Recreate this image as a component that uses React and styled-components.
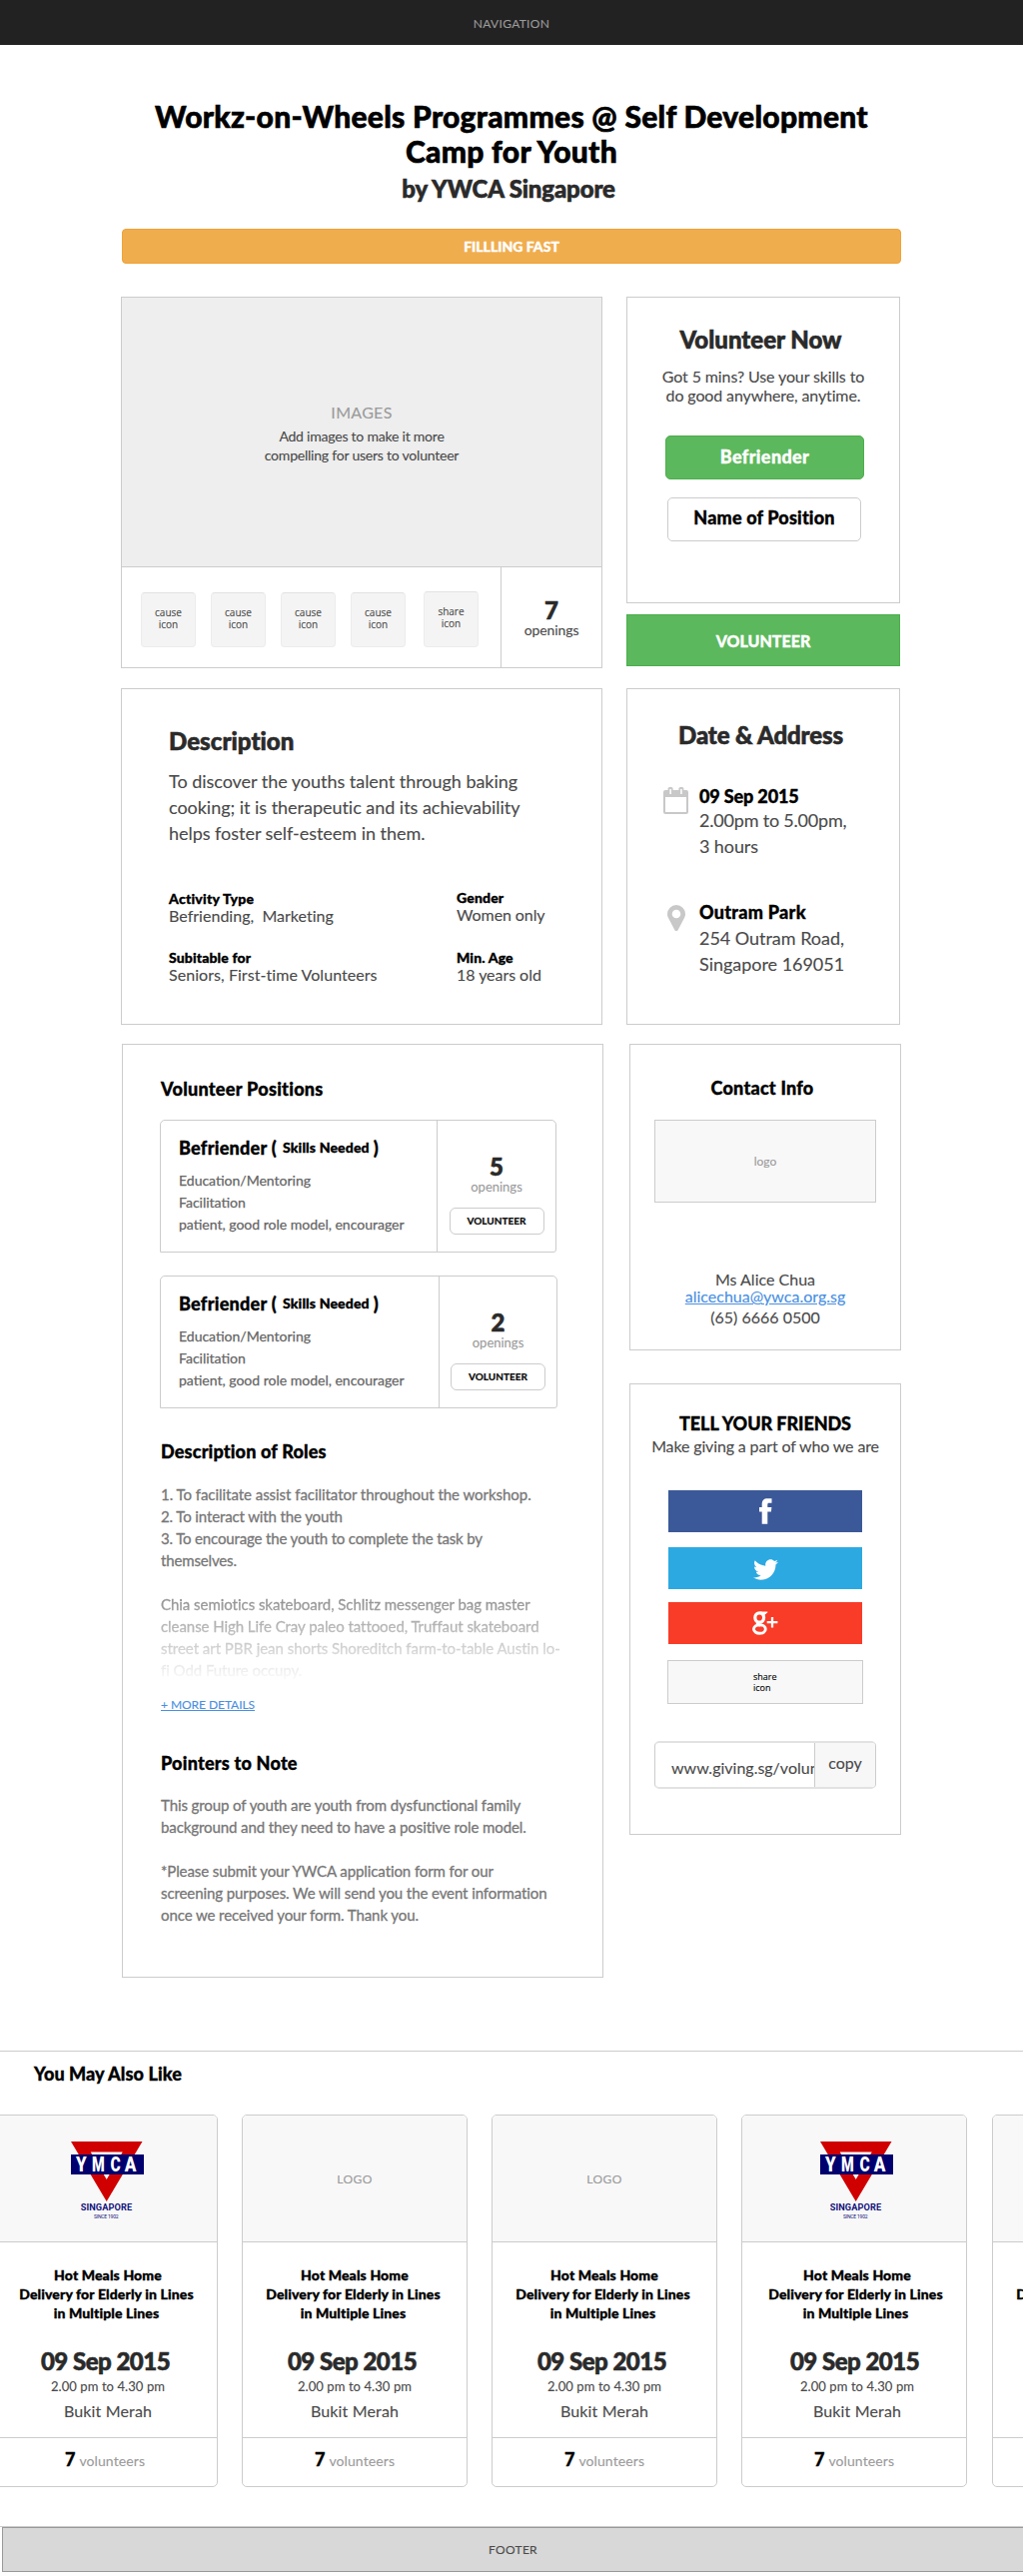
import React from "react";
import styled, { createGlobalStyle, css } from "styled-components";
import { FaTwitter } from "react-icons/fa";

const line = "#cccccc";
const ink = "#4a4a4a";
const dark = "#2a2a2a";
const muted = "#9b9b9b";
const green = "#5cb85c";
const blue = "#4a90e2";

const GlobalStyle = createGlobalStyle`
  * { box-sizing: border-box; }
  body {
    margin: 0;
    background: #fff;
    color: #000;
    font-family: Lato, "Liberation Sans", sans-serif;
    font-kerning: normal;
  }
  h1, h2, h3, p, ul { margin: 0; padding: 0; }
`;

const type = (size, height, weight = 400, color = ink) => css`
  font-size: ${size}px;
  line-height: ${height}px;
  font-weight: ${weight};
  color: ${color};
  letter-spacing: ${(p) => p.$track || 0}px;
  -webkit-text-stroke: ${weight === 900 ? (size > 20 ? 0.6 : size > 12 ? 0.35 : 0.15) : 0.12}px currentColor;
`;

const Page = styled.div`
  width: 1024px;
  height: 2579px;
  overflow: hidden;
`;

/* ---------- header ---------- */
const NavBar = styled.nav`
  height: 45px;
  padding-top: 1px;
  background: #222;
  text-align: center;
  ${type(12, 45, 400, muted)}
`;
const Header = styled.header`
  padding-top: 54px;
  text-align: center;
`;
const Title = styled.h1`
  ${type(30, 35, 900, "#000")}
`;
const Organiser = styled.p`
  margin-top: 5px;
  padding-right: 6px;
  ${type(24, 30, 900, dark)}
`;
const Alert = styled.div`
  width: 780px;
  height: 35px;
  margin: 25px 0 0 122px;
  border: 1px solid #eea236;
  border-radius: 4px;
  background: #f0ad4e;
  ${type(14, 33, 900, "#fff")}
`;

/* ---------- shared panels ---------- */
const Row = styled.section`
  display: flex;
  align-items: flex-start;
  gap: ${(p) => p.$gap || 24}px;
  margin: ${(p) => p.$top}px 0 0 ${(p) => p.$left || 121}px;
`;
const Column = styled.div`
  display: flex;
  flex-direction: column;
  width: ${(p) => p.$w}px;
`;
const Panel = styled.div`
  display: flex;
  flex-direction: column;
  align-items: ${(p) => (p.$center ? "center" : "stretch")};
  flex: none;
  width: ${(p) => p.$w}px;
  height: ${(p) => p.$h}px;
  margin-top: ${(p) => p.$top || 0}px;
  padding: ${(p) => p.$pad || 0};
  border: 1px solid ${line};
  background: #fff;
`;
const Heading = styled.h2`
  margin-right: ${(p) => p.$nudge || 0}px;
  ${type(24, 30, 900, dark)}
`;
const SubHeading = styled.h3`
  margin-top: ${(p) => p.$top || 0}px;
  margin-right: ${(p) => p.$nudge || 0}px;
  ${type(18, 22, 900, "#000")}
`;
const Count = styled.strong`
  ${type(24, 26, 900, dark)}
`;
const CountLabel = styled.span`
  ${(p) => (p.$small ? type(13, 14, 400, muted) : type(14, 14, 400, ink))}
`;

/* ---------- gallery ---------- */
const Gallery = styled.div`
  display: flex;
  flex-direction: column;
  align-items: center;
  height: 270px;
  padding-top: 105px;
  border-bottom: 1px solid ${line};
  background: #eee;
  text-align: center;
`;
const GalleryTitle = styled.p`
  ${type(16, 20, 400, muted)}
`;
const GalleryText = styled.p`
  margin-top: 4px;
  ${type(14, 19)}
`;
const GalleryFoot = styled.div`
  display: flex;
  height: 100px;
`;
const Tiles = styled.div`
  display: flex;
  align-items: flex-start;
  gap: 15px;
  width: 379px;
  padding: 25px 0 0 19px;
`;
const Tile = styled.div`
  width: 55px;
  height: ${(p) => (p.$share ? 56 : 55)}px;
  margin: ${(p) => (p.$share ? "-1px 0 0 3px" : 0)};
  padding-top: 13px;
  border: 1px solid #ececec;
  border-top-color: #e2e2e2;
  border-radius: 4px;
  background: #f4f4f4;
  text-align: center;
  ${type(10, 12)}
  font-family: "Open Sans", "Noto Sans", sans-serif;
`;
const Openings = styled.div`
  display: flex;
  flex-direction: column;
  align-items: center;
  flex: 1;
  padding-top: ${(p) => p.$top}px;
  border-left: 1px solid ${line};
`;

/* ---------- volunteer now ---------- */
const Pitch = styled.p`
  margin-top: 12px;
  text-align: center;
  ${type(16, 19)}
`;
const PositionButton = styled.div`
  width: ${(p) => (p.$primary ? 199 : 194)}px;
  height: 44px;
  margin: ${(p) => (p.$primary ? "31px 0 0 3px" : "18px 0 0 2px")};
  border: 1px solid ${(p) => (p.$primary ? "#4cae4c" : line)};
  border-radius: 5px;
  background: ${(p) => (p.$primary ? green : "#fff")};
  text-align: center;
  ${type(18, 40, 900)}
  line-height: ${(p) => (p.$primary ? 40 : 39)}px;
  color: ${(p) => (p.$primary ? "#fff" : "#000")};
`;
const VolunteerBar = styled.div`
  height: 52px;
  margin-top: 11px;
  border: 1px solid #4cae4c;
  background: ${green};
  text-align: center;
  ${type(16, 51, 900, "#fff")}
`;

/* ---------- description ---------- */
const Lead = styled.p`
  margin-top: 12px;
  white-space: nowrap;
  ${type(18, 26)}
`;
const Facts = styled.div`
  display: flex;
  margin-top: 44px;
`;
const FactColumn = styled.div`
  display: flex;
  flex: none;
  flex-direction: column;
  gap: ${(p) => p.$gap}px;
  width: ${(p) => p.$w}px;
  margin-top: ${(p) => p.$top || 0}px;
  white-space: pre;
`;
const FactLabel = styled.div`
  ${type(14, 17, 900, "#000")}
`;
const FactValue = styled.div`
  ${type(16, 18)}
`;

/* ---------- date & address ---------- */
const Place = styled.div`
  display: flex;
  width: 100%;
  margin-top: ${(p) => p.$top}px;
  padding-left: 36px;
`;
const PlaceIcon = styled.div`
  display: flex;
  justify-content: center;
  flex: none;
  width: 25px;
  margin-right: 11px;
  padding-top: ${(p) => p.$top}px;
  height: 32px;
`;
const PlaceName = styled.div`
  margin-bottom: ${(p) => p.$tight || 0}px;
  ${type(18, 24, 900, "#000")}
`;
const PlaceLine = styled.div`
  ${type(18, 26)}
`;

/* ---------- volunteer positions ---------- */
const PositionCard = styled.div`
  display: flex;
  width: ${(p) => p.$w}px;
  height: 133px;
  margin: ${(p) => p.$top}px 0 0 -1px;
  border: 1px solid ${line};
  border-radius: 5px 5px 3px 0;
`;
const PositionInfo = styled.div`
  width: ${(p) => p.$w}px;
  padding: 16px 0 0 18px;
`;
const PositionTitle = styled.div`
  display: flex;
  ${type(18, 22, 900, "#000")}
`;
const Skills = styled.span`
  margin: 0 4px 0 6px;
  ${type(14, 22, 900, "#000")}
`;
const PositionLines = styled.div`
  margin-top: 11px;
  ${type(14, 22, 400, "#666")}
  -webkit-text-stroke: 0.25px currentColor;
`;
const SmallButton = styled.div`
  width: 95px;
  height: 27px;
  margin-top: 14px;
  border: 1px solid ${line};
  border-radius: 6px;
  text-align: center;
  ${type(10, 25, 900, "#111")}
`;
const Body = styled.p`
  margin-top: ${(p) => p.$top || 0}px;
  white-space: nowrap;
  ${type(15, 22, 400, "#777")}
  -webkit-text-stroke: 0.3px currentColor;
`;
const Faded = styled(Body)`
  mask-image: linear-gradient(rgba(0, 0, 0, 0.86), rgba(0, 0, 0, 0.02));
`;
const BodyLine = styled.span`
  display: block;
  letter-spacing: ${(p) => p.$track}px;
`;
const MoreLink = styled.a`
  margin-top: 16px;
  text-decoration: underline;
  ${type(12, 16, 400, blue)}
`;

/* ---------- contact ---------- */
const LogoBox = styled.div`
  width: 222px;
  height: 83px;
  margin-top: 21px;
  border: 1px solid ${line};
  background: #f8f8f8;
  text-align: center;
  ${type(12, 81, 400, muted)}
`;
const ContactLine = styled.div`
  margin-top: ${(p) => p.$top || 0}px;
  ${type(16, 17)}
  ${(p) => p.$link && `color: ${blue}; text-decoration: underline;`}
`;

/* ---------- share ---------- */
const Slogan = styled.p`
  margin-top: 2px;
  ${type(16, 20)}
`;
const ShareButton = styled.div`
  display: flex;
  align-items: center;
  justify-content: center;
  flex: none;
  width: 194px;
  height: 42px;
  margin-top: ${(p) => p.$top}px;
  padding-top: ${(p) => p.$drop || 0}px;
  background: ${(p) => p.$bg};
  color: #fff;
`;
const SharePlaceholder = styled.div`
  width: 196px;
  height: 44px;
  margin-top: 16px;
  padding: 10px 0 0 85px;
  border: 1px solid ${line};
  background: #f8f8f8;
  ${type(9, 11, 400, "#000")}
  font-family: "Open Sans", "Noto Sans", sans-serif;
`;
const UrlField = styled.div`
  display: flex;
  width: 222px;
  height: 48px;
  margin-top: 37px;
  border: solid #e2e2e2;
  border-width: 2px 1px;
  border-left-color: ${line};
  border-right-color: ${line};
  border-radius: 5px;
  overflow: hidden;
`;
const UrlText = styled.div`
  width: 159px;
  padding: 3px 0 0 16px;
  overflow: hidden;
  white-space: nowrap;
  ${type(16, 44)}
`;
const CopyButton = styled.div`
  flex: 1;
  border-left: 1px solid ${line};
  background: #f7f7f7;
  text-align: center;
  ${type(16, 40)}
`;

/* ---------- related ---------- */
const Related = styled.section`
  height: 477px;
  margin-top: 73px;
  padding-top: 11px;
  border-top: 1px solid ${line};
  border-bottom: 1px solid ${line};
  overflow: hidden;
`;
const RelatedTitle = styled.h3`
  padding-left: 34px;
  ${type(18, 22, 900, "#000")}
`;
const RelatedRow = styled.div`
  display: flex;
  gap: 24px;
  margin: 30px 0 0 -8px;
`;
const EventCard = styled.article`
  display: flex;
  flex-direction: column;
  flex: none;
  width: 226px;
  height: 373px;
  border: 1px solid ${line};
  border-radius: 5px;
  overflow: hidden;
  text-align: center;
  &:last-child { margin-left: 1px; }
`;
const EventLogo = styled.div`
  display: flex;
  height: 127px;
  border-bottom: 1px solid ${line};
  background: #f8f8f8;
  align-items: center;
  justify-content: center;
  padding: ${(p) => (p.$drawn ? "6px 0 0 6px" : "2px 0 0")};
  ${type(12, 16, 400, muted)}
`;
const EventBody = styled.div`
  height: 196px;
  padding: 23px 0 0 ${(p) => p.$shift}px;
  border-bottom: 1px solid ${line};
`;
const EventTitle = styled.div`
  margin-right: 3px;
  ${type(14, 19, 900, "#000")}
`;
const TitleLead = styled.span`
  padding-left: 3px;
`;
const EventDate = styled.div`
  margin: 24px 5px 0 0;
  ${type(24, 30, 900, dark)}
`;
const EventTime = styled.div`
  margin-top: 1px;
  ${type(13, 18)}
`;
const EventPlace = styled.div`
  margin-top: 6px;
  ${type(16, 20)}
`;
const EventFoot = styled.div`
  display: flex;
  align-items: baseline;
  justify-content: center;
  gap: 4px;
  padding-top: 10px;
`;
const VolunteerCount = styled.strong`
  ${type(18, 22, 900, "#000")}
`;
const VolunteerLabel = styled.span`
  ${type(14, 22, 400, muted)}
`;
const Footer = styled.footer`
  width: 1030px;
  height: 45px;
  margin-left: 2px;
  padding-right: 7px;
  border: 1px solid #999;
  background: #d8d8d8;
  text-align: center;
  ${type(12, 43)}
`;

/* ---------- drawings ---------- */
const CalendarIcon = () => (
  <svg width="25" height="27" viewBox="0 0 25 27">
    <rect x="1" y="4" width="23" height="22" rx="1" fill="#fff" stroke="#c8c8c8" strokeWidth="2" />
    <path d="M1 4h23v6H1z" fill="#c8c8c8" />
    <rect x="4.6" y="0" width="5" height="8" rx="1.6" fill="#c8c8c8" />
    <rect x="15.4" y="0" width="5" height="8" rx="1.6" fill="#c8c8c8" />
    <path d="M6.4 2h1.5v5H6.4zM17.2 2h1.5v5h-1.5z" fill="#fff" />
  </svg>
);
const PinIcon = () => (
  <svg width="18" height="26" viewBox="0 0 18 26">
    <path
      fill="#c8c8c8"
      fillRule="evenodd"
      d="M9 0a9 9 0 0 1 9 9c0 1.700-.4 2.700-1 4l-6.300 12a1.900 1.900 0 0 1-3.400 0L1 13c-.6-1.300-1-2.300-1-4a9 9 0 0 1 9-9zm0 4.700a4.300 4.300 0 1 0 0 8.600 4.300 4.300 0 0 0 0-8.600z"
    />
  </svg>
);
const FacebookIcon = () => (
  <svg width="13" height="26" viewBox="0 0 13 26">
    <path
      fill="#fff"
      d="M2.700 25.800V13.400H0V8.900h2.700V6.100C2.700 2.100 4.600.2 8.300.2h4.200v4.500H10c-1.400 0-1.700.6-1.700 1.800v2.400h4.100l-.5 4.500H8.300v12.400z"
    />
  </svg>
);
const PlusIcon = () => (
  <svg width="26" height="24" viewBox="0 0 26 24" fill="none" stroke="#fff">
    <ellipse cx="7.200" cy="6.500" rx="4.400" ry="4.700" strokeWidth="3.200" />
    <path d="M8 .9h7.200l-2.400 2.400h-3z" fill="#fff" strokeWidth=".8" />
    <path d="M6.300 11c-2.200 1.600-.8 2.600 1.800 3.400" strokeWidth="2.800" />
    <ellipse cx="7.400" cy="18" rx="5.900" ry="4.300" strokeWidth="2.900" />
    <path d="M14.700 11.200h10.700M20 6v10.400" strokeWidth="2.300" />
  </svg>
);
const ymcaLetters = [
  { c: "Y", x: 10.6, w: 11 },
  { c: "M", x: 27.5, w: 13 },
  { c: "C", x: 44.7, w: 10.5 },
  { c: "A", x: 59.7, w: 12 },
];
const YmcaLogo = () => (
  <svg width="74" height="80" viewBox="0 0 74 80">
    <path d="M0 0h71.500L35.700 60z" fill="#d00000" />
    <path d="M19.700 10.500h32L35.700 38z" fill="#fff" />
    <path d="M0 13h73v20H0z" fill="#00006e" />
    {ymcaLetters.map(({ c, x, w }) => (
      <text
        key={c}
        x={x}
        y="30.300"
        textAnchor="middle"
        textLength={w}
        lengthAdjust="spacingAndGlyphs"
        fontFamily="Roboto, sans-serif"
        fontWeight="900"
        fontSize="19.700"
        fill="#fff"
        stroke="none"
      >
        {c}
      </text>
    ))}
    <text x="9.700" y="69.200" textLength="51.800" fontFamily="Roboto, sans-serif" fontWeight="700" fontSize="9.200" fill="#14147c" stroke="none">
      SINGAPORE
    </text>
    <text x="23" y="77.300" textLength="25" fontFamily="Roboto, sans-serif" fontWeight="400" fontSize="5" fill="#14147c" stroke="none">
      SINCE 1902
    </text>
  </svg>
);

const positions = [
  { openings: 5, width: 397, info: 276, top: 20 },
  { openings: 2, width: 398, info: 278, top: 23 },
];
const events = [
  { logo: true, shift: 3 },
  { shift: 0 },
  { shift: 0 },
  { logo: true, shift: 3 },
  { shift: 0 },
];

const Position = ({ openings, width, info, top }) => (
  <PositionCard $w={width} $top={top}>
    <PositionInfo $w={info}>
      <PositionTitle $track={0.27}>
        Befriender (<Skills $track={0.16}>Skills Needed</Skills>)
      </PositionTitle>
      <PositionLines>
        Education/Mentoring
        <br />
        Facilitation
        <br />
        patient, good role model, encourager
      </PositionLines>
    </PositionInfo>
    <Openings $top={33}>
      <Count>{openings}</Count>
      <CountLabel $small>openings</CountLabel>
      <SmallButton>VOLUNTEER</SmallButton>
    </Openings>
  </PositionCard>
);

const Event = ({ logo, shift }) => (
  <EventCard>
    <EventLogo $track={0.4} $drawn={logo}>{logo ? <YmcaLogo /> : "LOGO"}</EventLogo>
    <EventBody $shift={shift * 2}>
      <EventTitle $track={0.13}>
        <TitleLead>Hot Meals Home</TitleLead>
        <br />
        Delivery for Elderly in Lines
        <br />
        in Multiple Lines
      </EventTitle>
      <EventDate $track={-0.5}>09 Sep 2015</EventDate>
      <EventTime $track={0.08}>2.00 pm to 4.30 pm</EventTime>
      <EventPlace $track={0.15}>Bukit Merah</EventPlace>
    </EventBody>
    <EventFoot>
      <VolunteerCount>7</VolunteerCount>
      <VolunteerLabel $track={0.1}>volunteers</VolunteerLabel>
    </EventFoot>
  </EventCard>
);

export default function App() {
  return (
    <Page>
      <GlobalStyle />
      <NavBar $track={0.3}>NAVIGATION</NavBar>
      <Header>
        <Title $track={0.28}>
          Workz-on-Wheels Programmes @ Self Development
          <br />
          Camp for Youth
        </Title>
        <Organiser $track={-0.13}>by YWCA Singapore</Organiser>
        <Alert>FILLLING FAST</Alert>
      </Header>

      <Row $top={33}>
        <Panel $w={482} $h={372}>
          <Gallery>
            <GalleryTitle $track={0.3}>IMAGES</GalleryTitle>
            <GalleryText $track={-0.22}>
              Add images to make it more
              <br />
              compelling for users to volunteer
            </GalleryText>
          </Gallery>
          <GalleryFoot>
            <Tiles>
              {["cause", "cause", "cause", "cause", "share"].map((name, i) => (
                <Tile key={i} $share={name === "share"}>
                  {name}
                  <br />
                  icon
                </Tile>
              ))}
            </Tiles>
            <Openings $top={30}>
              <Count>7</Count>
              <CountLabel $track={-0.1}>openings</CountLabel>
            </Openings>
          </GalleryFoot>
        </Panel>
        <Column $w={274}>
          <Panel $w={274} $h={307} $pad="27px 0 0" $center>
            <Heading $nudge={5}>Volunteer Now</Heading>
            <Pitch $track={-0.12}>
              Got 5 mins? Use your skills to
              <br />
              do good anywhere, anytime.
            </Pitch>
            <PositionButton $primary $track={0.37}>Befriender</PositionButton>
            <PositionButton $track={0.17}>Name of Position</PositionButton>
          </Panel>
          <VolunteerBar>VOLUNTEER</VolunteerBar>
        </Column>
      </Row>

      <Row $top={20}>
        <Panel $w={482} $h={337} $pad="37px 0 0 47px">
          <Heading $track={0.06}>Description</Heading>
          <Lead $track={-0.03}>
            To discover the youths talent through baking
            <br />
            cooking; it is therapeutic and its achievability
            <br />
            helps foster self-esteem in them.
          </Lead>
          <Facts>
            <FactColumn $w={288} $gap={24}>
              <div>
                <FactLabel $track={0.25}>Activity Type</FactLabel>
                <FactValue $track={0.02}>{"Befriending,  Marketing"}</FactValue>
              </div>
              <div>
                <FactLabel $track={0.14}>Subitable for</FactLabel>
                <FactValue $track={0.06}>Seniors, First-time Volunteers</FactValue>
              </div>
            </FactColumn>
            <FactColumn $w={120} $gap={25} $top={-1}>
              <div>
                <FactLabel $track={0.16}>Gender</FactLabel>
                <FactValue $track={-0.09}>Women only</FactValue>
              </div>
              <div>
                <FactLabel $track={0.14}>Min. Age</FactLabel>
                <FactValue $track={-0.04}>18 years old</FactValue>
              </div>
            </FactColumn>
          </Facts>
        </Panel>
        <Panel $w={274} $h={337} $pad="31px 0 0" $center>
          <Heading $nudge={5} $track={-0.14}>Date &amp; Address</Heading>
          <Place $top={34}>
            <PlaceIcon $top={3}>
              <CalendarIcon />
            </PlaceIcon>
            <div>
              <PlaceName $tight={-1} $track={-0.13}>09 Sep 2015</PlaceName>
              <PlaceLine $track={-0.2}>2.00pm to 5.00pm,</PlaceLine>
              <PlaceLine $track={-0.1}>3 hours</PlaceLine>
            </div>
          </Place>
          <Place $top={41}>
            <PlaceIcon $top={5}>
              <PinIcon />
            </PlaceIcon>
            <div>
              <PlaceName $tight={1} $track={0.28}>Outram Park</PlaceName>
              <PlaceLine $track={-0.03}>254 Outram Road,</PlaceLine>
              <PlaceLine $track={-0.03}>Singapore 169051</PlaceLine>
            </div>
          </Place>
        </Panel>
      </Row>

      <Row $top={19} $left={122} $gap={26}>
        <Panel $w={482} $h={935} $pad="33px 0 0 38px">
          <SubHeading $track={0.29}>Volunteer Positions</SubHeading>
          {positions.map((p) => (
            <Position key={p.openings} {...p} />
          ))}
          <SubHeading $top={32} $track={0.18}>Description of Roles</SubHeading>
          <Body $top={21}>
            <BodyLine $track={-0.04}>1. To facilitate assist facilitator throughout the workshop.</BodyLine>
            <BodyLine $track={-0.12}>2. To interact with the youth</BodyLine>
            <BodyLine $track={-0.15}>3. To encourage the youth to complete the task by</BodyLine>
            <BodyLine $track={-0.15}>themselves.</BodyLine>
          </Body>
          <Faded $top={22}>
            <BodyLine $track={-0.04}>Chia semiotics skateboard, Schlitz messenger bag master</BodyLine>
            <BodyLine $track={-0.06}>cleanse High Life Cray paleo tattooed, Truffaut skateboard</BodyLine>
            <BodyLine $track={-0.03}>street art PBR jean shorts Shoreditch farm-to-table Austin lo-</BodyLine>
            <BodyLine $track={-0.05}>fi Odd Future occupy.</BodyLine>
          </Faded>
          <MoreLink $track={-0.05}>+ MORE DETAILS</MoreLink>
          <SubHeading $top={39} $track={0.23}>Pointers to Note</SubHeading>
          <Body $top={20}>
            <BodyLine $track={-0.09}>This group of youth are youth from dysfunctional family</BodyLine>
            <BodyLine $track={-0.09}>background and they need to have a positive role model.</BodyLine>
          </Body>
          <Body $top={22}>
            <BodyLine $track={-0.09}>*Please submit your YWCA application form for our</BodyLine>
            <BodyLine $track={-0.09}>screening purposes. We will send you the event information</BodyLine>
            <BodyLine $track={-0.09}>once we received your form. Thank you.</BodyLine>
          </Body>
        </Panel>
        <Column $w={272}>
          <Panel $w={272} $h={307} $pad="32px 0 0" $center>
            <SubHeading $nudge={6} $track={0.25}>Contact Info</SubHeading>
            <LogoBox>logo</LogoBox>
            <ContactLine $top={68}>Ms Alice Chua</ContactLine>
            <ContactLine $link>alicechua@ywca.org.sg</ContactLine>
            <ContactLine $top={4}>(65) 6666 0500</ContactLine>
          </Panel>
          <Panel $w={272} $h={452} $top={33} $pad="28px 0 0" $center>
            <SubHeading $track={-0.08}>TELL YOUR FRIENDS</SubHeading>
            <Slogan $track={-0.14}>Make giving a part of who we are</Slogan>
            <ShareButton $bg="#3b5998" $top={34}>
              <FacebookIcon />
            </ShareButton>
            <ShareButton $bg="#2ca9e1" $top={15} $drop={2}>
              <FaTwitter size={25} />
            </ShareButton>
            <ShareButton $bg="#f83c28" $top={13}>
              <PlusIcon />
            </ShareButton>
            <SharePlaceholder>
              share
              <br />
              icon
            </SharePlaceholder>
            <UrlField>
              <UrlText>www.giving.sg/volunteer</UrlText>
              <CopyButton>copy</CopyButton>
            </UrlField>
          </Panel>
        </Column>
      </Row>

      <Related>
        <RelatedTitle $track={0.1}>You May Also Like</RelatedTitle>
        <RelatedRow>
          {events.map((e, i) => (
            <Event key={i} {...e} />
          ))}
        </RelatedRow>
      </Related>
      <Footer $track={0.3}>FOOTER</Footer>
    </Page>
  );
}
